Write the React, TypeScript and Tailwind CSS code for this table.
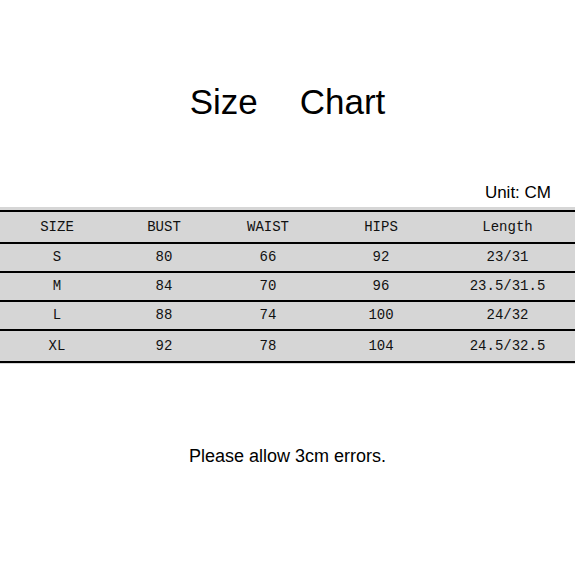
const rows = [
  ["S", "80", "66", "92", "23/31"],
  ["M", "84", "70", "96", "23.5/31.5"],
  ["L", "88", "74", "100", "24/32"],
  ["XL", "92", "78", "104", "24.5/32.5"],
];

const head = ["SIZE", "BUST", "WAIST", "HIPS", "Length"];

function Row({ cells, h }: { cells: string[]; h: string }) {
  return (
    <div className={`grid grid-cols-[114px_100px_108px_118px_135px] items-center ${h}`}>
      {cells.map((c, i) => (
        <span key={i} className="text-center">
          {c}
        </span>
      ))}
    </div>
  );
}

export default function App() {
  return (
    <div className="w-[575px] h-[574px] bg-white flex flex-col text-black font-['Liberation_Sans',Arial,sans-serif]">
      <div className="flex justify-center gap-[42px] pt-[82px] text-[35px] leading-[40px]">
        <span>Size</span>
        <span>Chart</span>
      </div>

      <div className="mt-[61px] pr-[24px] text-right text-[17px] leading-[20px]">Unit: CM</div>

      <div className="mt-[4px] bg-[#d6d6d6] pt-[3px] pb-[1px] font-['Liberation_Mono',monospace] text-[14px] text-[#111]">
        <div className="border-t-2 border-black" />
        <Row cells={head} h="h-[30px]" />
        {rows.map((r, i) => (
          <div key={i}>
            <div className="border-t-2 border-black" />
            <Row cells={r} h={i === rows.length - 1 ? "h-[30px]" : "h-[27px]"} />
          </div>
        ))}
        <div className="border-t-2 border-black" />
      </div>

      <div className="mt-[82px] text-center text-[18px] leading-[20px]">Please allow 3cm errors.</div>
    </div>
  );
}
